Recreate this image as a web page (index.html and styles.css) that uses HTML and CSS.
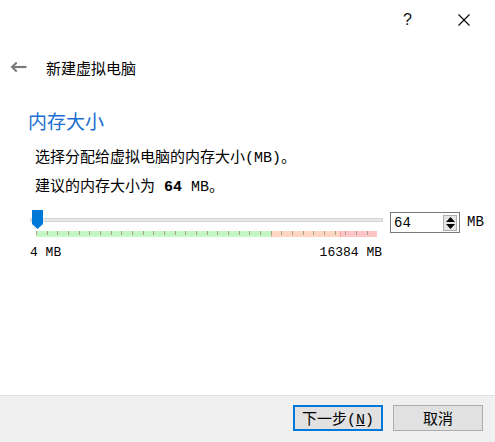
FILE: index.html
```html
<!DOCTYPE html>
<html lang="zh-CN">
<head>
    <meta charset="UTF-8">
    <title>新建虚拟电脑</title>
    <link rel="stylesheet" href="styles.css">
</head>
<body>
    <div class="dialog">
        <div class="titlebar">
            <span class="help">?</span>
            <svg class="close" width="12" height="12" viewBox="0 0 12 12">
                <path d="M0.5 0.5 L11.5 11.5 M11.5 0.5 L0.5 11.5" stroke="#000" stroke-width="1.1" fill="none"/>
            </svg>
        </div>
        <div class="header">
            <svg class="back" width="17" height="12" viewBox="0 0 17 12">
                <path d="M16.5 6 H3" stroke="#7a7a7a" stroke-width="2.2" fill="none"/>
                <polygon points="0.5,6 6,0.8 7.4,2.2 3.5,6 7.4,9.8 6,11.2" fill="#7a7a7a"/>
            </svg>
            <span class="header-title">新建虚拟电脑</span>
        </div>

        <main class="content">
            <h1 class="page-title">内存大小</h1>
            <p class="text">选择分配给虚拟电脑的内存大小(MB)。</p>
            <p class="text">建议的内存大小为 <b>64</b> MB。</p>

            <div class="slider-row">
                <div class="slider">
                    <div class="slider-groove">
                        <div class="track"></div>
                        <svg class="handle" width="11" height="19" viewBox="0 0 11 19">
                            <polygon points="0,0 11,0 11,14 5.5,19 0,14" fill="#0078d7"/>
                        </svg>
                    </div>
                    <div class="scale"></div>
                    <div class="scale-labels">
                        <span>4 MB</span>
                        <span>16384 MB</span>
                    </div>
                </div>
                <div class="spinbox">
                    <span class="spin-value">64</span>
                    <div class="spin-buttons">
                        <span class="spin-btn">
                            <svg width="9" height="5" viewBox="0 0 9 5"><polygon points="0,5 9,5 4.5,0" fill="#000"/></svg>
                        </span>
                        <span class="spin-btn">
                            <svg width="9" height="5" viewBox="0 0 9 5"><polygon points="0,0 9,0 4.5,5" fill="#000"/></svg>
                        </span>
                    </div>
                </div>
                <span class="unit">MB</span>
            </div>
        </main>

        <div class="footer">
            <button class="btn btn-primary">下一步(<u>N</u>)</button>
            <button class="btn">取消</button>
        </div>
    </div>
</body>
</html>
```

FILE: styles.css
```css
body, html {
    margin: 0;
    padding: 0;
    background: #fff;
    overflow: hidden;
}
.dialog {
    width: 495px;
    height: 442px;
    display: flex;
    flex-direction: column;
    font-family: "Noto Sans CJK SC", sans-serif;
    color: #000;
}
.titlebar {
    height: 40px;
    display: flex;
    align-items: center;
    justify-content: flex-end;
    padding-right: 25px;
}
.help {
    font-family: "Liberation Sans", sans-serif;
    font-size: 16px;
    margin-right: 46px;
    color: #111;
}
.header {
    margin-top: 15px;
    height: 24px;
    display: flex;
    align-items: center;
    padding-left: 10px;
}
.header-title {
    margin-left: 19px;
    font-size: 15px;
}
.content {
    flex: 1;
    padding-left: 28px;
}
.page-title {
    margin: 29px 0 0 0;
    font-size: 19px;
    font-weight: normal;
    line-height: 26px;
    color: #1a6fd1;
}
.text {
    margin: 9px 0 0 7px;
    font-family: "Liberation Mono", "Noto Sans CJK SC", monospace;
    font-size: 15px;
    line-height: 20px;
}
.text:first-of-type {
    margin-top: 15px;
}
.slider-row {
    display: flex;
    align-items: flex-start;
    margin-top: 12px;
    padding-left: 2px;
}
.slider {
    width: 353px;
}
.slider-groove {
    position: relative;
    height: 20px;
}
.track {
    position: relative;
    top: 8px;
    height: 2px;
    background: #e8e8e8;
    border: 1px solid #d4d4d4;
}
.handle {
    position: absolute;
    left: 2px;
    top: 0;
}
.scale {
    margin: 1px 0 0 6px;
    width: 341px;
    height: 6px;
    background:
        repeating-linear-gradient(to right, #a39c94 0 1px, transparent 1px 10.67px) 0 0 / 332px 4px no-repeat,
        linear-gradient(to right,
            #c4f7c4 0 235px,
            #f2b08c 235px 236px,
            #ffd6c2 236px 304px,
            #ff9c9c 304px 305px,
            #ffc4c4 305px 341px);
}
.scale-labels {
    display: flex;
    justify-content: space-between;
    margin-top: 8px;
    font-family: "Liberation Mono", monospace;
    font-size: 13px;
    line-height: 16px;
    padding-right: 1px;
}
.spinbox {
    margin: 2px 0 0 7px;
    width: 68px;
    height: 19px;
    border: 1px solid #7a7a7a;
    display: flex;
    align-items: center;
    justify-content: space-between;
    background: #fff;
}
.spin-value {
    padding-left: 3px;
    font-family: "Liberation Mono", monospace;
    font-size: 14px;
}
.spin-buttons {
    display: flex;
    flex-direction: column;
    margin-right: 2px;
    border: 1px solid #adadad;
    background: #e5e5e5;
}
.spin-btn {
    width: 12px;
    height: 7px;
    display: flex;
    align-items: center;
    justify-content: center;
}
.unit {
    margin: 4px 0 0 7px;
    font-family: "Liberation Mono", monospace;
    font-size: 14px;
}
.footer {
    height: 47px;
    background: #f0f0f0;
    border-top: 1px solid #dfdfdf;
    display: flex;
    justify-content: flex-end;
    align-items: flex-start;
    gap: 10px;
    padding: 9px 12px 0 0;
    box-sizing: border-box;
}
.btn {
    width: 90px;
    height: 26px;
    background: #e1e1e1;
    border: 1px solid #adadad;
    font-family: "Liberation Mono", "Noto Sans CJK SC", monospace;
    font-size: 15px;
    padding: 0;
    color: #000;
}
.btn-primary {
    border: 2px solid #0078d7;
}
```
